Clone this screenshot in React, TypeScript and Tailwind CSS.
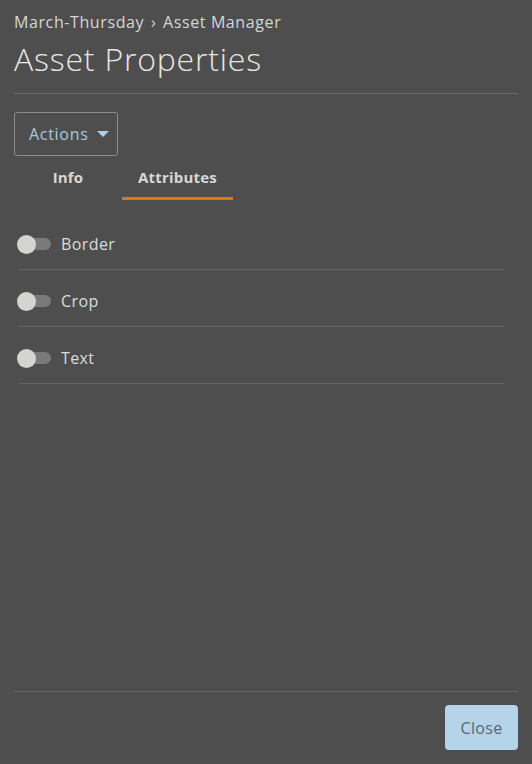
import { useState } from "react";

const attributes = ["Border", "Crop", "Text"];

function Toggle({ on, onClick }: { on: boolean; onClick: () => void }) {
  return (
    <button onClick={onClick} className="relative h-[19px] w-[34px] shrink-0">
      <span className="absolute left-[10px] top-[3px] h-[12px] w-[24px] rounded-full bg-[#7a7a7a]" />
      <span
        className={`absolute top-0 h-[19px] w-[19px] rounded-full bg-[#d4d4d0] ${on ? "left-[15px]" : "left-0"}`}
      />
    </button>
  );
}

export default function App() {
  const [tab, setTab] = useState("Attributes");
  const [toggles, setToggles] = useState<Record<string, boolean>>({});

  return (
    <div className="flex h-[764px] w-full flex-col bg-[#4e4e4e] px-[14px] font-['Open_Sans',sans-serif] text-[#dcdcda]">
      <div className="pt-[11px] text-[16px] leading-[22px] tracking-[0.6px] text-[#d6d6d4]">
        March-Thursday <span className="px-[2px]">›</span> Asset Manager
      </div>
      <h1 className="mt-[6px] text-[32px] font-light leading-[40px] tracking-[0.8px] text-[#e6e6e3]">Asset Properties</h1>
      <div className="mt-[14px] h-px bg-[#6a6a6a]" />

      <div className="mt-[18px]">
        <button className="flex h-[44px] items-center gap-[8px] rounded-[3px] border border-[#8c8c8c] pl-[14px] pr-[8px] text-[16px] tracking-[0.7px] text-[#a8c8de]">
          Actions
          <svg width="12" height="6" viewBox="0 0 12 6">
            <path d="M0 0h12L6 6z" fill="#b0d0e6" />
          </svg>
        </button>
      </div>

      <div className="mt-[4px] flex text-[15px] font-bold tracking-[0.2px]">
        {["Info", "Attributes"].map((t) => (
          <button
            key={t}
            onClick={() => setTab(t)}
            className={`h-[40px] border-b-[3px] pb-[2px] ${t === "Info" ? "w-[108px]" : "w-[111px]"} ${
              tab === t ? "border-[#e8730a]" : "border-transparent"
            } text-[#d8d8d6]`}
          >
            {t}
          </button>
        ))}
      </div>

      <div className="mt-[13px] flex flex-col pr-[14px]">
        {attributes.map((a) => (
          <div key={a} className="flex h-[57px] flex-col">
            <div className="flex flex-1 items-center gap-[10px] pl-[3px] pt-[6px]">
              <Toggle on={!!toggles[a]} onClick={() => setToggles((s) => ({ ...s, [a]: !s[a] }))} />
              <span className="text-[16px] tracking-[0.4px] text-[#dcdcda]">{a}</span>
            </div>
            <div className="ml-[5px] h-px bg-[#646464]" />
          </div>
        ))}
      </div>

      <div className="flex-1" />
      <div className="h-px bg-[#646464]" />
      <div className="flex justify-end pb-[14px] pt-[13px]">
        <button className="h-[45px] w-[73px] rounded-[4px] bg-[#b5d4ea] text-[16px] tracking-[0.3px] text-[#5c6570]">
          Close
        </button>
      </div>
    </div>
  );
}
